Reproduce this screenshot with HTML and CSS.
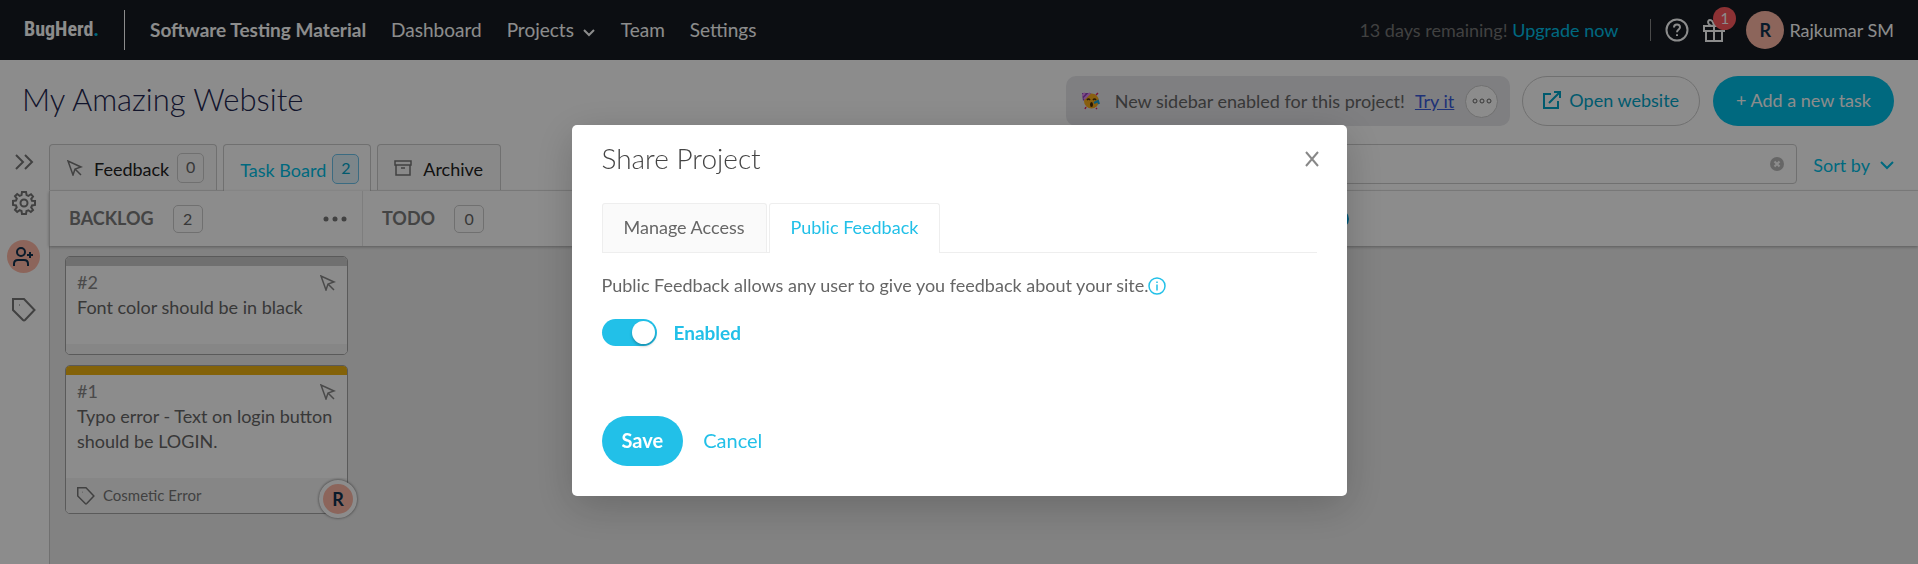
FILE: index.html
```html
<!DOCTYPE html>
<html lang="en">
<head>
    <meta charset="UTF-8">
    <meta name="viewport" content="width=device-width, initial-scale=1.0">
    <title>BugHerd</title>
    <link rel="stylesheet" href="styles.css">
</head>
<body>
    <header class="navbar">
        <a class="logo" href="#">BugHerd<span class="logo-dot">.</span></a>
        <nav class="nav-links">
            <a class="nav-org" href="#">Software Testing Material</a>
            <a href="#">Dashboard</a>
            <a href="#">Projects
                <svg class="nav-chevron" width="12" height="8" viewBox="0 0 12 8"><path d="M1 1l5 5 5-5"/></svg>
            </a>
            <a href="#">Team</a>
            <a href="#">Settings</a>
        </nav>
        <p class="trial">13 days remaining! <a href="#">Upgrade now</a></p>
        <div class="nav-tools">
            <button class="icon-btn" aria-label="Help">
                <svg width="24" height="24" viewBox="0 0 24 24"><circle cx="12" cy="12" r="10.5"/><path d="M9 9.5c0-4 6-4 6-.3 0 2.300-3 2.300-3 5"/><path d="M12 16.300v1.800"/></svg>
            </button>
            <button class="icon-btn gift" aria-label="What's new">
                <svg width="24" height="24" viewBox="0 0 24 24"><path d="M2 8h20v5H2zM4 13h16v10H4zM12 8v15M12 8C5 8 5 2 8 2c3 0 4 6 4 6s1-6 4-6c3 0 3 6-4 6"/></svg>
                <span class="gift-count">1</span>
            </button>
        </div>
        <a class="user" href="#"><span class="avatar">R</span>Rajkumar SM</a>
    </header>

    <div class="title-row">
        <h1 class="project-title">My Amazing Website</h1>
        <div class="notice">
            <svg class="party" width="18" height="18" viewBox="0 0 18 18">
                <circle cx="9.500" cy="9" r="7.500" fill="#f9ad1c"/>
                <path d="M0 1h9L1 9z" fill="#8e3fc0"/>
                <path d="M2 7l6-6M0 4l3-3" stroke="#e68af0" fill="none"/>
                <path d="M5 8q1.500-2 3 0M11 8q1.500-2 3 0" stroke="#4a2c05" stroke-width="1.500" fill="none"/>
                <ellipse cx="9.500" cy="12.500" rx="1.500" ry="2.500" fill="#4a2c05"/>
                <path d="M12 11l4-2 1 3" stroke="#1aa5dc" stroke-width="2" fill="none"/>
                <path d="M14 3l2-2M3 17l1-2M14 17l1-1" stroke="#e0245e" stroke-width="1.500"/>
            </svg>
            <span>New sidebar enabled for this project!</span>
            <a href="#">Try it</a>
            <button class="notice-more" aria-label="More">
                <svg width="20" height="6" viewBox="0 0 20 6"><circle cx="3" cy="3" r="2"/><circle cx="10" cy="3" r="2"/><circle cx="17" cy="3" r="2"/></svg>
            </button>
        </div>
        <button class="btn btn-outline">
            <svg width="18" height="18" viewBox="0 0 18 18"><path d="M8 3H1v14h14v-7M6 12L17 1M11 1h6v6"/></svg>
            Open website
        </button>
        <button class="btn btn-primary">+ Add a new task</button>
    </div>

    <div class="workspace">
        <aside class="sidebar">
            <button class="icon-btn expand" aria-label="Expand">
                <svg width="24" height="24" viewBox="0 0 24 24"><path d="M4 5l7 7-7 7M13 5l7 7-7 7"/></svg>
            </button>
            <button class="icon-btn" aria-label="Settings">
                <svg width="24" height="24" viewBox="0 0 24 24"><circle cx="12" cy="12" r="3.500"/><path d="M10 1h4l.6 3 1.800.8L19 3.200 21 5.500l-1.800 2.300.8 2L23 10v4l-3 .5-.8 1.900L21 19l-2.200 2-2.400-1.700-1.900.7L14 23h-4l-.5-3-1.900-.8L5.200 21 3 18.800l1.700-2.400-.7-1.900L1 14v-4l3-.4.8-2L3 5.200 5.200 3l2.400 1.800 1.900-.8z"/></svg>
            </button>
            <button class="icon-btn share" aria-label="Share project">
                <svg width="22" height="22" viewBox="0 0 22 22"><circle cx="8" cy="6" r="4"/><path d="M1 20v-2c0-3 2-4 4-4h6c2 0 4 1 4 4v2M17 6v6M14 9h6"/></svg>
            </button>
            <button class="icon-btn" aria-label="Tags">
                <svg width="24" height="24" viewBox="0 0 24 24"><path d="M1 1h11l10.500 11-9.500 10q-1 1-2 0L1 12zM7 7h.5"/></svg>
            </button>
        </aside>

        <main class="main">
            <div class="toolbar">
                <button class="tab">
                    <svg width="16" height="16" viewBox="0 0 16 16"><path d="M1 1l5 14 2-6 6-2zM8 9l6 6"/></svg>
                    Feedback <span class="count">0</span>
                </button>
                <button class="tab tab-active">Task Board <span class="count">2</span></button>
                <button class="tab tab-archive">
                    <svg width="18" height="18" viewBox="0 0 18 18"><path d="M1 2h16v4H1zM2 6v10h14V6M7 9h4"/></svg>
                    Archive
                </button>
                <div class="search">
                    <input type="text" aria-label="Search tasks">
                    <button class="search-clear" aria-label="Clear">
                        <svg width="14" height="14" viewBox="0 0 14 14"><circle cx="7" cy="7" r="7"/><path d="M4.500 4.500l5 5M9.500 4.500l-5 5"/></svg>
                    </button>
                </div>
                <button class="sort">Sort by
                    <svg width="14" height="10" viewBox="0 0 14 10"><path d="M1 2l6 6 6-6"/></svg>
                </button>
            </div>

            <div class="columns-head">
                <div class="column-title">
                    <h2>BACKLOG</h2><span class="count">2</span>
                    <button class="column-more" aria-label="Column menu">
                        <svg width="24" height="6" viewBox="0 0 24 6"><circle cx="3" cy="3" r="2.500"/><circle cx="12" cy="3" r="2.500"/><circle cx="21" cy="3" r="2.500"/></svg>
                    </button>
                </div>
                <div class="column-title">
                    <h2>TODO</h2><span class="count">0</span>
                </div>
                <div class="column-title"></div>
                <div class="column-title"></div>
                <button class="add-column" aria-label="Add column"></button>
            </div>

            <section class="cards">
                <article class="card">
                    <div class="card-body">
                        <div class="card-top">
                            <span>#2</span>
                            <svg width="16" height="16" viewBox="0 0 16 16"><path d="M1 1l5 14 2-6 6-2zM8 9l6 6"/></svg>
                        </div>
                        <p>Font color should be in black</p>
                    </div>
                    <div class="card-foot"></div>
                </article>
                <article class="card card-important">
                    <div class="card-body">
                        <div class="card-top">
                            <span>#1</span>
                            <svg width="16" height="16" viewBox="0 0 16 16"><path d="M1 1l5 14 2-6 6-2zM8 9l6 6"/></svg>
                        </div>
                        <p>Typo error - Text on login button should be LOGIN.</p>
                    </div>
                    <div class="card-foot card-tags">
                        <svg width="18" height="18" viewBox="0 0 24 24"><path d="M1 1h11l10.500 11-9.500 10q-1 1-2 0L1 12zM7 7h.5"/></svg>
                        Cosmetic Error
                    </div>
                    <span class="assignee">R</span>
                </article>
            </section>
        </main>
    </div>

    <div class="overlay">
        <div class="modal" role="dialog" aria-labelledby="modal-title">
            <div class="modal-head">
                <h2 id="modal-title">Share Project</h2>
                <button class="modal-close" aria-label="Close">
                    <svg width="14" height="16" viewBox="0 0 14 16"><path d="M1 1l12 14M13 1L1 15"/></svg>
                </button>
            </div>
            <div class="modal-tabs">
                <button class="modal-tab">Manage Access</button>
                <button class="modal-tab modal-tab-active">Public Feedback</button>
            </div>
            <p class="modal-text">Public Feedback allows any user to give you feedback about your site.<svg width="18" height="18" viewBox="0 0 18 18"><circle cx="9" cy="9" r="8"/><path d="M9 7.500v6M9 4.500v1.500"/></svg></p>
            <label class="toggle">
                <input type="checkbox" checked>
                <span class="toggle-track"></span>
                Enabled
            </label>
            <div class="modal-actions">
                <button class="btn-save">Save</button>
                <button class="btn-cancel">Cancel</button>
            </div>
        </div>
    </div>
</body>
</html>
```
FILE: styles.css
```css
* {
    box-sizing: border-box;
}

body {
    margin: 0;
    min-height: 100vh;
    display: flex;
    flex-direction: column;
    font-family: Lato, sans-serif;
    font-size: 18px;
    line-height: 25px;
    color: #666;
    background-color: #fff;
}

h1, h2, p {
    margin: 0;
    font-weight: 400;
}

a {
    color: inherit;
    text-decoration: none;
}

button {
    padding: 0;
    border: none;
    background: none;
    font: inherit;
    color: inherit;
    cursor: pointer;
}

svg {
    flex: none;
    fill: none;
    stroke: currentColor;
    stroke-width: 2;
}

/* Navbar */
.navbar {
    display: flex;
    align-items: center;
    height: 60px;
    padding: 0 24px;
    background-color: #161b22;
    color: #fff;
}

.logo {
    display: flex;
    align-items: center;
    width: 101px;
    height: 40px;
    padding-bottom: 2px;
    border-right: 1px solid #fff;
    font-family: "Roboto Condensed", "Liberation Sans Narrow", Lato, sans-serif;
    font-size: 20px;
    font-weight: 700;
}

.logo-dot {
    color: #00bfe7;
}

.nav-links {
    display: flex;
    gap: 25px;
    margin-left: 25px;
    padding-bottom: 2px;
    font-size: 19px;
}

.nav-org {
    font-weight: 700;
}

.nav-chevron {
    margin: 0 1px 0 4px;
}

.trial {
    margin-left: auto;
    color: #777;
}

.trial a {
    color: #00bfe7;
}

.nav-tools {
    display: flex;
    align-items: center;
    gap: 13px;
    height: 22px;
    margin-left: 32px;
    padding-left: 14px;
    border-left: 1px solid #888;
}

.icon-btn {
    display: flex;
    position: relative;
}

.gift-count {
    position: absolute;
    top: -11px;
    right: -10px;
    width: 23px;
    height: 23px;
    border-radius: 50%;
    background-color: #ff5a5f;
    font-size: 15px;
    line-height: 22px;
}

.user {
    display: flex;
    align-items: center;
    gap: 5px;
    margin-left: 20px;
}

.avatar {
    width: 38px;
    height: 38px;
    border-radius: 50%;
    background-color: #ffb9a7;
    color: #10304d;
    font-weight: 700;
    line-height: 38px;
    text-align: center;
}

/* Project title row */
.title-row {
    display: flex;
    align-items: center;
    height: 84px;
    padding: 0 24px 2px 22px;
}

.project-title {
    margin-right: auto;
    padding-bottom: 4px;
    font-size: 31px;
    font-weight: 300;
    line-height: 40px;
    color: #22264f;
}

.notice {
    display: flex;
    align-items: center;
    height: 50px;
    padding: 0 12px 0 16px;
    border-radius: 10px;
    background-color: #e7e7eb;
}

.party {
    margin-right: 15px;
    stroke: none;
}

.notice a {
    margin: 0 11px 0 10px;
    color: #3a5bd9;
    text-decoration: underline;
}

.notice-more {
    display: flex;
    align-items: center;
    justify-content: center;
    width: 33px;
    height: 33px;
    border: 1px solid #ccc;
    border-radius: 50%;
    background-color: #fff;
}

.notice-more svg {
    stroke-width: 1;
}

.btn {
    display: flex;
    align-items: center;
    gap: 8px;
    height: 50px;
    border-radius: 25px;
}

.btn-outline {
    margin: 0 13px 0 12px;
    padding: 0 20px 2px;
    border: 1px solid #ccc;
    color: #00a5c9;
}

.btn-primary {
    padding: 0 23px 2px;
    background-color: #00bfe7;
    color: #fff;
}

/* Sidebar */
.workspace {
    display: flex;
    flex: 1;
}

.sidebar {
    display: flex;
    flex-direction: column;
    align-items: center;
    gap: 25px;
    width: 49px;
    padding: 6px 2px 0 0;
    color: #777;
}

.sidebar .expand {
    margin-bottom: -8px;
}

.sidebar .share {
    align-items: center;
    justify-content: center;
    width: 33px;
    height: 33px;
    border-radius: 50%;
    background-color: #ffb9a7;
    color: #10304d;
}

.main {
    display: flex;
    flex-direction: column;
    flex: 1;
}

/* Tabs and search */
.toolbar {
    display: flex;
    gap: 6px;
    height: 47px;
    padding-right: 24px;
    border-bottom: 1px solid #e6e6e6;
}

.tab {
    display: flex;
    align-items: center;
    gap: 8px;
    height: 46px;
    padding: 4px 12px 0 17px;
    border: 1px solid #ccc;
    border-bottom: none;
    border-radius: 4px 4px 0 0;
    background-color: #fafafa;
    color: #222;
}

.tab svg {
    margin: 0 3px 4px 0;
    color: #777;
    stroke-width: 1.5;
}

.tab-active {
    gap: 6px;
    height: 47px;
    padding: 4px 11px 0 16px;
    background-color: #fff;
    color: #00bfe7;
}

.tab-archive {
    padding: 4px 17px 0 16px;
}

.count {
    min-width: 27px;
    height: 30px;
    margin-bottom: 3px;
    border: 1px solid #ccc;
    border-radius: 5px;
    font-size: 16px;
    line-height: 26px;
    text-align: center;
    color: #666;
}

.tab-active .count {
    border-color: #6cc3ec;
    background-color: #e3f4fc;
    color: #00a5c9;
}

.search {
    position: relative;
    width: 600px;
    height: 40px;
    margin-left: auto;
}

.search input {
    width: 100%;
    height: 100%;
    padding: 0 36px 0 12px;
    border: 1px solid #ccc;
    border-radius: 4px;
    font: inherit;
}

.search-clear {
    position: absolute;
    top: 13px;
    right: 13px;
    display: flex;
}

.search-clear circle {
    fill: #bbb;
    stroke: none;
}

.search-clear path {
    stroke: #fff;
}

.sort {
    display: flex;
    align-items: center;
    gap: 10px;
    height: 42px;
    margin-left: 10px;
    color: #00bfe7;
}

/* Board */
.columns-head {
    display: flex;
    align-items: center;
    position: relative;
    height: 55px;
    border-left: 1px solid #ccc;
    box-shadow: 0 1px 3px rgba(0, 0, 0, 0.3);
}

.column-title {
    display: flex;
    align-items: center;
    width: 313px;
    height: 55px;
    padding: 0 15px 0 19px;
    border-right: 1px solid #e6e6e6;
}

.column-title:last-of-type {
    border-right: none;
}

.column-title h2 {
    font-size: 18px;
    font-weight: 700;
    color: #7c7c7c;
}

.column-title .count {
    width: 30px;
    height: 28px;
    margin: 0 0 0 19px;
}

.column-more {
    display: flex;
    margin-left: auto;
}

.column-more svg {
    fill: #777;
    stroke: none;
}

.add-column {
    width: 20px;
    height: 20px;
    margin-left: 27px;
    border-radius: 50%;
    background-color: #00a0dc;
}

.cards {
    display: flex;
    flex-direction: column;
    gap: 10px;
    flex: 1;
    padding: 10px 15px;
    border-left: 1px solid #ccc;
    background-color: #ededed;
}

.card {
    position: relative;
    width: 283px;
    border: 1px solid #a5a5a5;
    border-radius: 5px;
    background-color: #fff;
}

.card::before {
    content: "";
    display: block;
    height: 9px;
    border-radius: 4px 4px 0 0;
    background-color: #cdcdcd;
}

.card-important::before {
    background-color: #eeb211;
}

.card-body {
    padding: 4px 11px 24px;
}

.card-top {
    display: flex;
    justify-content: space-between;
    color: #888;
}

.card-top svg {
    margin-top: 5px;
    stroke-width: 1.5;
}

.card-foot {
    height: 10px;
    border-radius: 0 0 4px 4px;
    background-color: #f5f5f5;
}

.card-tags {
    display: flex;
    align-items: center;
    gap: 8px;
    height: 35px;
    padding: 0 11px;
    font-size: 15px;
    color: #777;
}

.assignee {
    position: absolute;
    right: -10px;
    bottom: -5px;
    width: 38px;
    height: 38px;
    border: 4px solid #fff;
    border-radius: 50%;
    background-color: #ffb9a7;
    box-shadow: 0 0 3px rgba(0, 0, 0, 0.6);
    color: #10304d;
    font-weight: 700;
    line-height: 30px;
    text-align: center;
}

/* Share modal */
.overlay {
    position: fixed;
    inset: 0;
    padding-top: 125px;
    background-color: rgba(0, 0, 0, 0.45);
}

.modal {
    width: 775px;
    max-width: 100%;
    margin: 0 auto;
    padding: 14px 30px 30px;
    border-radius: 5px;
    background-color: #fff;
    box-shadow: 0 10px 40px rgba(0, 0, 0, 0.2);
}

.modal-head {
    display: flex;
    align-items: center;
    justify-content: space-between;
    height: 40px;
}

.modal-head h2 {
    padding-bottom: 2px;
    font-size: 28px;
    font-weight: 300;
    line-height: 40px;
    color: #444;
}

.modal-close {
    display: flex;
    margin-right: -2px;
    color: #888;
}

.modal-tabs {
    display: flex;
    gap: 2px;
    height: 50px;
    margin-top: 24px;
    border-bottom: 1px solid #eee;
}

.modal-tab {
    height: 49px;
    padding: 0 21px 2px;
    border: 1px solid #eee;
    border-bottom: none;
    border-radius: 3px 3px 0 0;
    background-color: #fafafa;
}

.modal-tab-active {
    height: 50px;
    background-color: #fff;
    color: #22c0e8;
}

.modal-text {
    display: flex;
    align-items: center;
    margin-top: 20px;
}

.modal-text svg {
    color: #22c0e8;
    stroke-width: 1.5;
}

.toggle {
    display: flex;
    align-items: center;
    gap: 17px;
    height: 27px;
    margin-top: 21px;
    font-size: 19px;
    font-weight: 700;
    color: #22c0e8;
}

.toggle input {
    position: absolute;
    opacity: 0;
}

.toggle-track {
    display: flex;
    align-items: center;
    width: 55px;
    height: 27px;
    padding: 2px;
    border-radius: 14px;
    background-color: #ccc;
}

.toggle-track::after {
    content: "";
    width: 23px;
    height: 23px;
    border-radius: 50%;
    background-color: #fff;
    box-shadow: 0 2px 3px rgba(0, 0, 0, 0.25);
}

.toggle input:checked + .toggle-track {
    justify-content: flex-end;
    background-color: #22c0e8;
}

.modal-actions {
    display: flex;
    gap: 20px;
    margin-top: 70px;
    font-size: 20px;
}

.btn-save {
    height: 50px;
    padding: 0 20px 2px;
    border-radius: 25px;
    background-color: #22c0e8;
    color: #fff;
    font-weight: 700;
}

.btn-cancel {
    padding-bottom: 2px;
    color: #22c0e8;
}
```
